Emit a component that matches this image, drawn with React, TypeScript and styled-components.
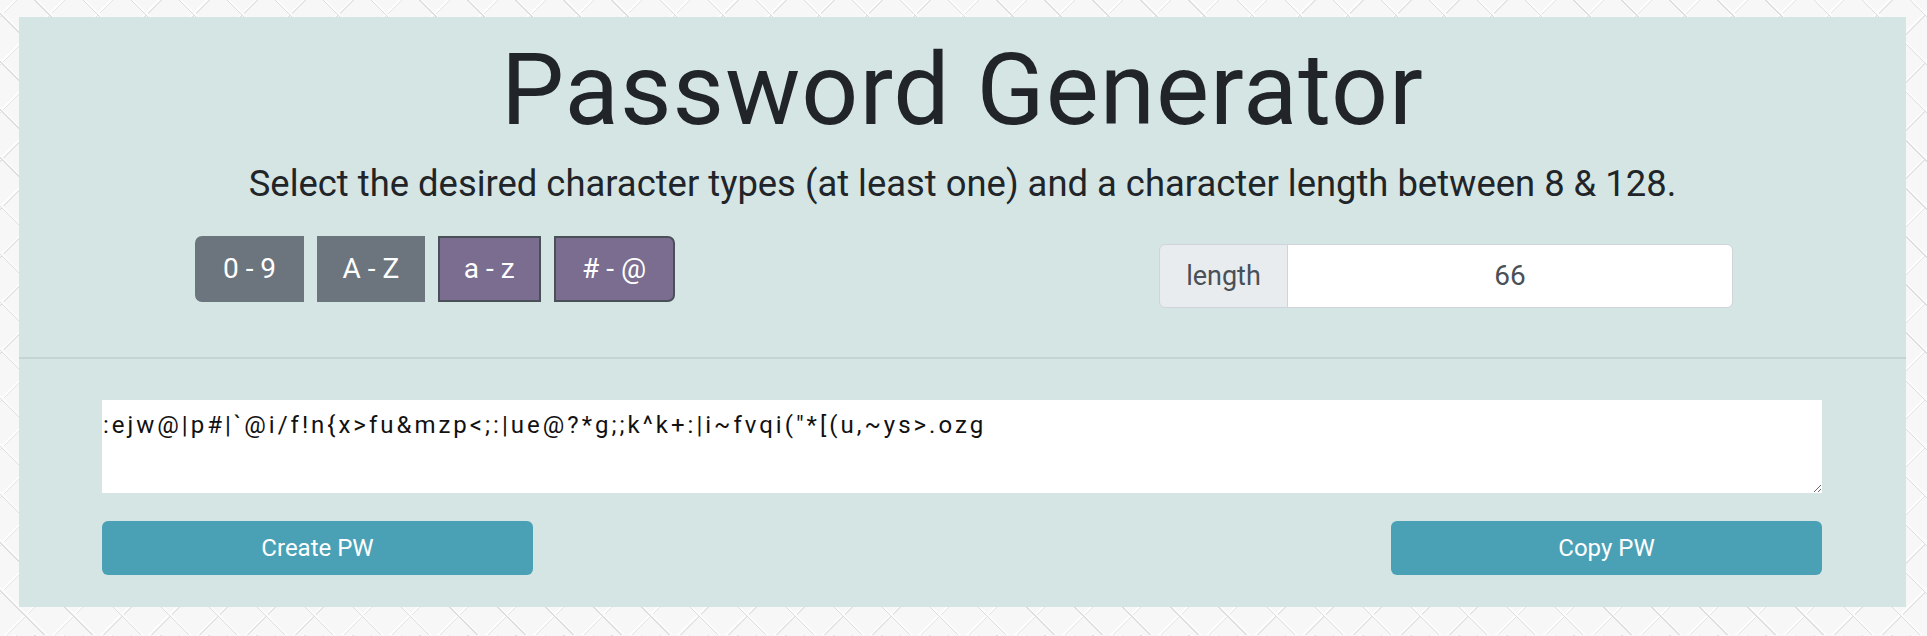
import React, { useState } from "react";
import styled, { createGlobalStyle } from "styled-components";

const GlobalStyle = createGlobalStyle`
  html, body {
    margin: 0;
    padding: 0;
  }
  body {
    font-family: Roboto, "Noto Sans", "DejaVu Sans", sans-serif;
    color: #212529;
    background-color: #f3f3f3;
    background-image:
      repeating-linear-gradient(45deg, transparent 0 31px, #dedede 31px 32px, #fbfbfb 32px 34px),
      repeating-linear-gradient(-45deg, transparent 0 31px, #e4e4e4 31px 32px, #fdfdfd 32px 34px),
      linear-gradient(#f7f7f7, #f7f7f7);
  }
`;

const Page = styled.div`
  padding: 17px 21px 28px 19px;
`;

const Panel = styled.main`
  background: #d5e5e4;
`;

const Header = styled.header`
  padding-top: 13px;
  text-align: center;
`;

const Title = styled.h1`
  margin: 0;
  font-size: 100px;
  font-weight: 400;
  line-height: 1.2;
  letter-spacing: 1px;
  color: #212529;
`;

const Subtitle = styled.p`
  margin: 12px 0 0;
  font-size: 36.4px;
  line-height: 1.2;
  color: #212529;
`;

const ControlsRow = styled.section`
  display: flex;
  align-items: flex-start;
  justify-content: space-between;
  margin-top: 30px;
  padding: 0 173px 49px 176px;
`;

const ToggleGroup = styled.div`
  display: flex;
  gap: 13px;
`;

const Toggle = styled.button<{ $active?: boolean; $pos?: "first" | "last" | "mid"; $pad: number }>`
  height: 66px;
  padding: 0 ${(p) => p.$pad}px;
  font-family: inherit;
  font-size: 28px;
  color: #fff;
  background: ${(p) => (p.$active ? "#7a6d8f" : "#6c757d")};
  border: 2px solid ${(p) => (p.$active ? "#4a5058" : "#6c757d")};
  border-radius: ${(p) =>
    p.$pos === "first" ? "7px 0 0 7px" : p.$pos === "last" ? "0 7px 7px 0" : "0"};
  cursor: pointer;
`;

const InputGroup = styled.div`
  display: flex;
  margin-top: 8px;
  height: 64px;
`;

const InputLabel = styled.span`
  display: flex;
  align-items: center;
  justify-content: center;
  box-sizing: border-box;
  width: 129px;
  font-size: 27px;
  color: #495057;
  background: #e9ecef;
  border: 1px solid #ced4da;
  border-radius: 6px 0 0 6px;
`;

const LengthInput = styled.input`
  box-sizing: border-box;
  width: 446px;
  height: 100%;
  margin: 0 0 0 -1px;
  padding: 0 12px;
  font-family: inherit;
  font-size: 28px;
  text-align: center;
  color: #495057;
  background: #fff;
  border: 1px solid #ced4da;
  border-radius: 0 6px 6px 0;
  outline: none;
`;

const Divider = styled.hr`
  margin: 0;
  height: 2px;
  border: 0;
  background: #c4d4d3;
`;

const OutputSection = styled.section`
  padding: 41px 84px 32px 83px;
`;

const Output = styled.textarea`
  display: block;
  box-sizing: border-box;
  width: 100%;
  height: 93px;
  margin: 0;
  padding: 9px 1px 0;
  font-family: inherit;
  font-size: 24px;
  line-height: 33px;
  letter-spacing: 3px;
  color: #111;
  background: #fff;
  border: 0;
  border-radius: 0;
  outline: none;
`;

const ActionRow = styled.div`
  display: flex;
  justify-content: space-between;
  margin-top: 28px;
`;

const ActionButton = styled.button`
  width: 431px;
  height: 54px;
  font-family: inherit;
  font-size: 24px;
  font-weight: 400;
  color: #fff;
  background: #4aa1b6;
  border: 0;
  border-radius: 6px;
  cursor: pointer;
`;

const toggles: { label: string; active: boolean; pos: "first" | "mid" | "last"; pad: number }[] = [
  { label: "0 - 9", active: false, pos: "first", pad: 26 },
  { label: "A - Z", active: false, pos: "mid", pad: 23.5 },
  { label: "a - z", active: true, pos: "mid", pad: 24 },
  { label: "# - @", active: true, pos: "last", pad: 26.5 },
];

export default function App() {
  const [length, setLength] = useState("66");
  const password = ':ejw@|p#|`@i/f!n{x>fu&mzp<;:|ue@?*g;;k^k+:|i~fvqi("*[(u,~ys>.ozg';

  return (
    <>
      <GlobalStyle />
      <Page>
        <Panel>
          <Header>
            <Title>Password Generator</Title>
            <Subtitle>
              Select the desired character types (at least one) and a character length between 8 &amp; 128.
            </Subtitle>
          </Header>
          <ControlsRow>
            <ToggleGroup>
              {toggles.map((t) => (
                <Toggle key={t.label} $active={t.active} $pos={t.pos} $pad={t.pad}>
                  {t.label}
                </Toggle>
              ))}
            </ToggleGroup>
            <InputGroup>
              <InputLabel>length</InputLabel>
              <LengthInput value={length} onChange={(e) => setLength(e.target.value)} />
            </InputGroup>
          </ControlsRow>
          <Divider />
          <OutputSection>
            <Output readOnly value={password} />
            <ActionRow>
              <ActionButton>Create PW</ActionButton>
              <ActionButton>Copy PW</ActionButton>
            </ActionRow>
          </OutputSection>
        </Panel>
      </Page>
    </>
  );
}
